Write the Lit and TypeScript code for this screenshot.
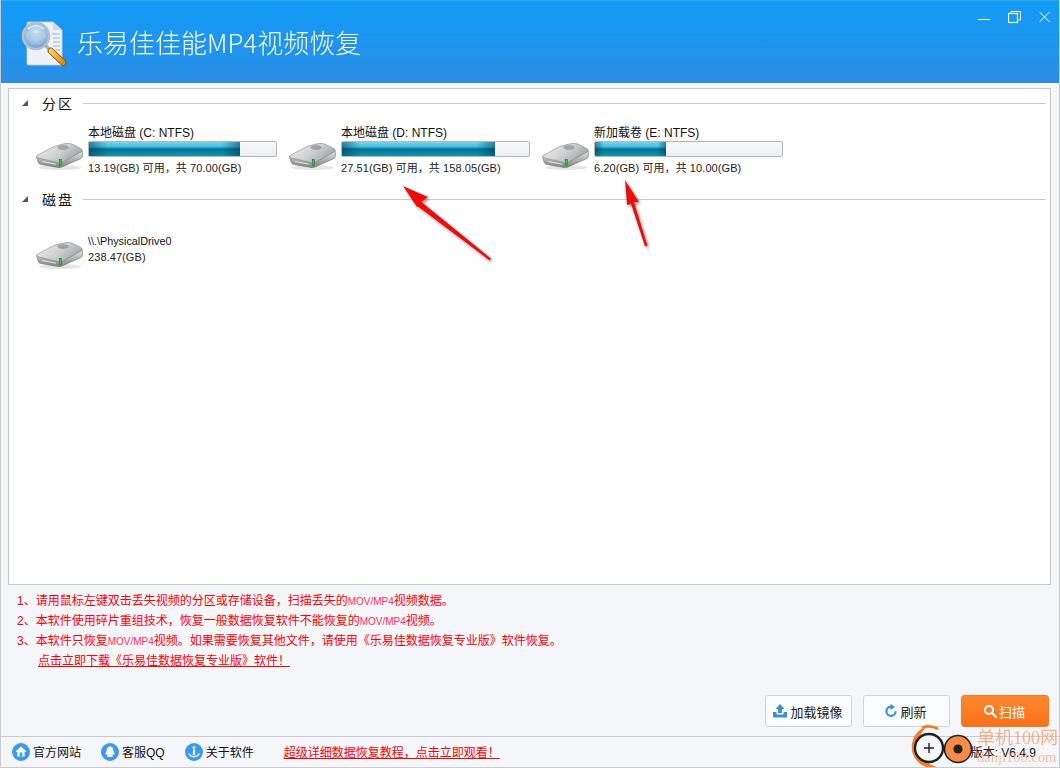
import { LitElement, html, css, svg } from "lit";
import { customElement } from "lit/decorators.js";

const hdd = html`<svg class="hdd" width="50" height="30" viewBox="0 0 50 30">
  <defs>
    <linearGradient id="hTop" x1="0" y1="0" x2="1" y2="0.5"><stop offset="0" stop-color="#f2f3f3"/><stop offset=".6" stop-color="#cdd0d0"/><stop offset="1" stop-color="#a3a7a7"/></linearGradient>
    <linearGradient id="hSide" x1="0" y1="0" x2="0" y2="1"><stop offset="0" stop-color="#e4e6e6"/><stop offset="1" stop-color="#7f8282"/></linearGradient>
  </defs>
  <ellipse cx="25" cy="26.5" rx="21" ry="2.5" fill="#000" opacity=".1"/>
  <path d="M1.5 15.5 L3 21 Q3.5 23 6 23.5 L23 26.5 Q26 27 28 25.5 L46 17.5 Q47.5 16.5 47.5 14 L47.2 10 L25 22 L2 15 Z" fill="url(#hSide)" stroke="#6f7272" stroke-width=".6"/>
  <path d="M2 14.5 L14 8 Q20 4.5 26 3.5 L31 2.5 Q35 2 38 3.5 L46.5 8 Q48 9.2 46.5 10.5 L28 21 Q26 22.2 23.5 21.7 L3 16.8 Q0.5 16 2 14.5 Z" fill="url(#hTop)" stroke="#858888" stroke-width=".6"/>
  <ellipse cx="28" cy="6.5" rx="5.5" ry="2.4" fill="#8e9292" opacity=".7"/>
  <path d="M7 20.5 L21 23.2" stroke="#f2f3f3" stroke-width=".8"/>
  <rect x="24.3" y="18.5" width="2.2" height="6" fill="#35d03b" stroke="#1d5a22" stroke-width=".5"/>
</svg>`;

const notes = [
  ["1", "请用鼠标左键双击丢失视频的分区或存储设备，扫描丢失的|MOV/MP4|视频数据。"],
  ["2", "本软件使用碎片重组技术，恢复一般数据恢复软件不能恢复的|MOV/MP4|视频。"],
  ["3", "本软件只恢复|MOV/MP4|视频。如果需要恢复其他文件，请使用《乐易佳数据恢复专业版》软件恢复。"],
];

@customElement("app-root")
export class AppRoot extends LitElement {
  static styles = css`
    :host { display: block; width: 1060px; height: 768px; font-family: "Liberation Sans", "Noto Sans CJK SC", sans-serif; }
    * { box-sizing: border-box; }
    .win { position: relative; width: 1060px; height: 768px; background: #f5f6f9; overflow: hidden; display: flex; flex-direction: column; border-left: 1px solid #c9cbce; border-right: 1px solid #c9cbce; border-bottom: 1px solid #c9cbce; color: #111; }
    .head { height: 83px; flex: none; background: linear-gradient(#119df8, #2a8de4); display: flex; align-items: center; padding: 0 10px 0 20px; margin: 0 -1px; border-top: 1px solid #3f9fd8; }
    .logo { margin-right: 9px; flex: none; }
    .title { font-size: 26px; line-height: 32px; color: #fff; font-family: "Noto Sans CJK SC", sans-serif; font-weight: 300; flex: 1; opacity: .97; }
    .ctrls { display: flex; align-self: flex-start; gap: 18px; margin-top: 9px; }
    .panel { flex: none; height: 497px; margin: 5px 8px 0 7px; background: #fff; border: 1px solid #c6c8ca; padding: 4px 4px 0 13px; }
    .sec { display: flex; align-items: center; height: 20px; }
    .tri { width: 0; height: 0; border-left: 6px solid transparent; border-bottom: 6px solid #555; margin: 0 14px 0 0; flex: none; }
    .sec-label { font-size: 14px; letter-spacing: 2px; color: #111; margin-right: 9px; flex: none; }
    .sec-line { flex: 1; height: 1px; background: #c8cacc; }
    .drives { display: flex; padding: 12px 0 0 14px; gap: 17px; height: 76px; }
    .drives.disk { padding-top: 25px; height: 70px; }
    .drive { display: flex; width: 236px; }
    .hdd { flex: none; margin: 16px 1px 0 -1px; width: 50px; height: 30px; }
    .d-info { margin-left: 2px; width: 189px; flex: none; display: flex; flex-direction: column; }
    .d-name { font-size: 12px; line-height: 16px; height: 16px; white-space: nowrap; color: #111; }
    .bar { height: 16px; flex: none; border: 1px solid #b4b6b8; border-radius: 2px; background: linear-gradient(#f8f9fa, #eceef0); overflow: hidden; }
    .fill { height: 100%; background:
      linear-gradient(90deg, rgba(0,60,90,.55), rgba(0,60,90,0) 12%, rgba(0,60,90,0) 88%, rgba(0,60,90,.55)),
      linear-gradient(#6fd8ee 0%, #3fbcda 35%, #086f8e 50%, #0b9ab4 100%); }
    .d-size { font-size: 11px; line-height: 18px; white-space: nowrap; color: #222; margin-top: 2px; letter-spacing: .08px; }
    .disk .hdd { margin-top: 6px; }
    .disk .d-name { font-size: 10.8px; line-height: 14px; }
    .disk .d-size { margin-top: -2px; }
    .notes { flex: none; padding: 6px 0 0 16px; height: 110px; color: #f00; font-size: 12px; line-height: 20px; }
    .note { white-space: nowrap; height: 20px; }
    .note .lat { font-size: 10px; color: #ff2f5e; }
    .note.link { padding-left: 21px; height: 21px; }
    .note.link span { text-decoration: underline; }
    .btns { flex: none; display: flex; justify-content: flex-end; gap: 11px; height: 33px; padding-right: 10px; }
    .btn { width: 87px; height: 32px; border: 1px solid #d2d4d7; border-radius: 3px; background: #fbfcfd; display: flex; align-items: center; justify-content: center; gap: 2px; font-size: 13px; color: #222; padding: 0 2px 0 0; font-family: inherit; }
    .btn.scan { width: 88px; background: linear-gradient(#fd8830, #fa701a); border-color: #f77b24; color: #fff; }
    .foot { flex: none; margin-top: 8px; height: 32px; border-top: 1px solid #c9cbce; display: flex; align-items: center; padding: 0 0 2px 11px; font-size: 12px; color: #111; }
    .fi { display: flex; align-items: center; gap: 3px; margin-right: 20px; }
    .flink { color: #f00; text-decoration: underline; font-size: 12px; margin-left: 10px; white-space: nowrap; }
    .ver { margin-left: auto; margin-right: 23px; font-size: 12px; }
    .overlay { position: absolute; left: -1px; top: 0; pointer-events: none; }
    .wm { position: absolute; left: 976px; top: 727px; width: 85px; color: #f3a777; font-family: "Liberation Serif", "Noto Sans CJK SC", serif; pointer-events: none; }
    .wm div:first-child { font-size: 18px; line-height: 22px; white-space: nowrap; opacity: .85; }
    .wm div:last-child { font-size: 14.5px; line-height: 17px; white-space: nowrap; opacity: .7; }
  `;

  drive(name: string, used: number, size: string) {
    return html`<div class="drive">${hdd}<div class="d-info">
      <div class="d-name">${name}</div>
      <div class="bar"><div class="fill" style="width:${used}%"></div></div>
      <div class="d-size">${size}</div>
    </div></div>`;
  }

  circleIcon(inner: unknown) {
    return html`<svg width="18" height="18" viewBox="0 0 18 18"><circle cx="9" cy="9" r="9" fill="#3a9bee"/>${inner}</svg>`;
  }

  note(n: string, text: string) {
    const parts = text.split("|");
    return html`<div class="note">${n}、${parts.map((p) => (p === "MOV/MP4" ? html`<span class="lat">${p}</span>` : p))}</div>`;
  }

  render() {
    return html`<div class="win">
      <div class="head">
        <svg class="logo" width="48" height="52" viewBox="0 0 48 52">
          <defs>
            <radialGradient id="lens" cx=".5" cy=".4" r=".6"><stop offset="0" stop-color="#dcecf8"/><stop offset=".7" stop-color="#8fbce6"/><stop offset="1" stop-color="#5d93d6"/></radialGradient>
            <linearGradient id="hand" x1="0" y1="0" x2="1" y2="1"><stop offset="0" stop-color="#ffd04e"/><stop offset="1" stop-color="#e88a10"/></linearGradient>
          </defs>
          <path d="M9 6 H33 L42 14 V48 Q42 49 41 49 H9 Q7 49 7 47 V8 Q7 6 9 6 Z" fill="#eef2f8" stroke="#c6d2e2" stroke-width=".8"/>
          <path d="M33 6 V14 H42 Z" fill="#cfdaea"/>
          <g stroke="#9eb0c6" stroke-width="1"><path d="M32 18H40M33 22H40M33 26H40M33 30H40M36 34H40"/></g>
          <circle cx="16" cy="20" r="13" fill="url(#lens)" stroke="#b9bfc6" stroke-width="2.6"/>
          <rect x="6" y="17" width="20" height="5" fill="#b5cbdc" opacity=".6"/>
          <path d="M8 13 Q16 6 24 13" fill="none" stroke="#eef6fd" stroke-width="1.6" opacity=".8"/>
          <path d="M25.5 29.5 L29.5 33.5" stroke="#aab0b8" stroke-width="3.4"/>
          <path d="M31 35 L43 46.5" stroke="#7a4a10" stroke-width="6.5" stroke-linecap="round"/>
          <path d="M31 35 L43 46.5" stroke="url(#hand)" stroke-width="5" stroke-linecap="round"/>
        </svg>
        <div class="title">乐易佳佳能MP4视频恢复</div>
        <div class="ctrls">
          <svg width="12" height="20" viewBox="0 0 12 20"><path d="M0 9.5H12" stroke="#fff" stroke-width="1"/></svg>
          <svg width="13" height="20" viewBox="0 0 13 20"><path d="M3 3V1.5H12.5V10H10.5" fill="none" stroke="#fff"/><rect x=".5" y="3.5" width="9" height="9" fill="none" stroke="#fff" stroke-width="1.2"/></svg>
          <svg width="11" height="20" viewBox="0 0 11 20"><path d="M.5 2L10.5 12M10.5 2L.5 12" stroke="#fff" stroke-width="1"/></svg>
        </div>
      </div>

      <div class="panel">
        <div class="sec"><span class="tri"></span><span class="sec-label">分区</span><span class="sec-line"></span></div>
        <div class="drives">
          ${this.drive("本地磁盘 (C: NTFS)", 81, "13.19(GB) 可用，共 70.00(GB)")}
          ${this.drive("本地磁盘 (D: NTFS)", 82, "27.51(GB) 可用，共 158.05(GB)")}
          ${this.drive("新加载卷 (E: NTFS)", 38, "6.20(GB) 可用，共 10.00(GB)")}
        </div>
        <div class="sec"><span class="tri"></span><span class="sec-label">磁盘</span><span class="sec-line"></span></div>
        <div class="drives disk">
          <div class="drive">${hdd}<div class="d-info">
            <div class="d-name">\\\\.\\PhysicalDrive0</div>
            <div class="d-size">238.47(GB)</div>
          </div></div>
        </div>
      </div>

      <div class="notes">
        ${notes.map((n) => this.note(n[0], n[1]))}
        <div class="note link"><span>点击立即下载《乐易佳数据恢复专业版》软件！</span></div>
      </div>

      <div class="btns">
        <button class="btn"><svg width="16" height="14" viewBox="0 0 16 14"><path d="M8 0L12.5 5H10V9H6V5H3.5Z" fill="#3a8fd8"/><path d="M1 8H4.5V10.5H11.5V8H15V13.5H1Z" fill="#3a8fd8"/></svg>加载镜像</button>
        <button class="btn"><svg width="14" height="14" viewBox="0 0 14 14"><path d="M7 2.6A4.6 4.6 0 1 0 11.6 7.2" fill="none" stroke="#3a8fd8" stroke-width="2.2"/><path d="M6.5 0L11 3L6.5 6Z" fill="#3a8fd8"/></svg>刷新</button>
        <button class="btn scan"><svg width="14" height="14" viewBox="0 0 14 14"><circle cx="6" cy="6" r="4" fill="none" stroke="#fff" stroke-width="2"/><path d="M9 9L13 13" stroke="#fff" stroke-width="2.2" stroke-linecap="round"/></svg>扫描</button>
      </div>

      <div class="foot">
        <div class="fi">${this.circleIcon(svg`<path d="M9 3.5L14.2 8.3L13.2 9.3L12.6 8.8V13.6H5.4V8.8L4.8 9.3L3.8 8.3Z" fill="#fff"/><rect x="7.7" y="9.5" width="2.6" height="4.1" fill="#3a9bee"/>`)}官方网站</div>
        <div class="fi">${this.circleIcon(svg`<path d="M9 3.5C6.6 3.5 5.6 5.6 5.6 8C4.8 9.3 4 10.8 4.6 11.6C5 11.8 5.4 11.3 5.8 10.9C6 11.7 6.4 12.2 6.8 12.6C6 12.9 5.8 13.6 6.8 13.9H11.2C12.2 13.6 12 12.9 11.2 12.6C11.6 12.2 12 11.7 12.2 10.9C12.6 11.3 13 11.8 13.4 11.6C14 10.8 13.2 9.3 12.4 8C12.4 5.6 11.4 3.5 9 3.5Z" fill="#fff"/>`)}客服QQ</div>
        <div class="fi">${this.circleIcon(svg`<circle cx="9" cy="4.6" r="1.4" fill="#fff"/><rect x="7.9" y="6.6" width="2.2" height="5.4" fill="#fff"/><path d="M4.2 10.4A4.8 3.2 0 0 0 13.8 10.4" fill="none" stroke="#fff" stroke-width="1.6"/>`)}关于软件</div>
        <span class="flink">超级详细数据恢复教程，点击立即观看！</span>
        <span class="ver">版本: V6.4.9</span>
      </div>

      <svg class="overlay" width="1060" height="768" viewBox="0 0 1060 768">
        <defs><filter id="sh" x="-20%" y="-20%" width="150%" height="150%"><feDropShadow dx="1.5" dy="2" stdDeviation="1.6" flood-color="#000" flood-opacity=".4"/></filter></defs>
        <g filter="url(#sh)" fill="#ee1111">
          <path d="M403 186L428 197L421.5 202L491 258.6L489.6 260.4L418 206.5L417 207Z"/>
          <path d="M625 180L639 202L634 202L647.5 245.5L645 246.5L631 204L627 205Z"/>
        </g>
        <path d="M925 727.5A21 21 0 0 0 937 767.5A24 24 0 0 1 925 727.5Z" fill="#f37b2a" stroke="#f37b2a" stroke-width="1"/>
        <path d="M922 727.5A20 20 0 0 1 938 729" fill="none" stroke="#f37b2a" stroke-width="2.6"/>
        <circle cx="929" cy="748" r="14" fill="#f5f6f9" stroke="#222" stroke-width="2.4"/>
        <path d="M929 743V753M924 748H934" stroke="#222" stroke-width="1.4"/>
        <circle cx="958" cy="749" r="13.5" fill="#f68a47" stroke="#222" stroke-width="1.6"/>
        <circle cx="958" cy="749" r="4.6" fill="#222"/>
      </svg>
      <div class="wm"><div>单机100网</div><div>danji100.com</div></div>
    </div>`;
  }
}
